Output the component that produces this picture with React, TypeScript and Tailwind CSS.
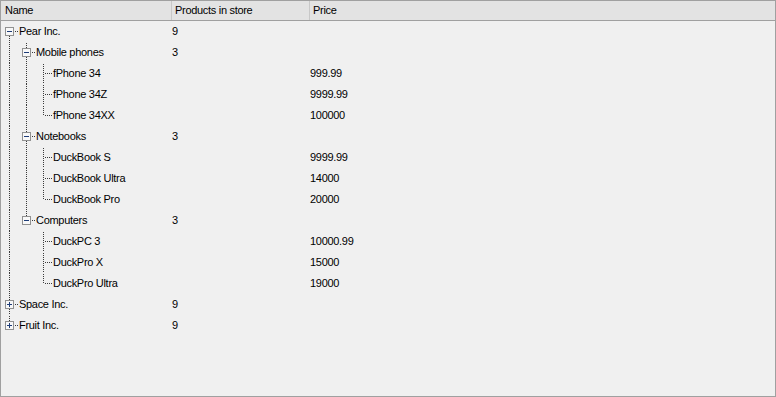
import React from "react";

// A node of the product tree
type Node = {
  name: string;
  count?: string;
  price?: string;
  expanded?: boolean;
  children?: Node[];
};

const data: Node[] = [
  {
    name: "Pear Inc.",
    count: "9",
    expanded: true,
    children: [
      {
        name: "Mobile phones",
        count: "3",
        expanded: true,
        children: [
          { name: "fPhone 34", price: "999.99" },
          { name: "fPhone 34Z", price: "9999.99" },
          { name: "fPhone 34XX", price: "100000" },
        ],
      },
      {
        name: "Notebooks",
        count: "3",
        expanded: true,
        children: [
          { name: "DuckBook S", price: "9999.99" },
          { name: "DuckBook Ultra", price: "14000" },
          { name: "DuckBook Pro", price: "20000" },
        ],
      },
      {
        name: "Computers",
        count: "3",
        expanded: true,
        children: [
          { name: "DuckPC 3", price: "10000.99" },
          { name: "DuckPro X", price: "15000" },
          { name: "DuckPro Ultra", price: "19000" },
        ],
      },
    ],
  },
  { name: "Space Inc.", count: "9", children: [{ name: "x" }] },
  { name: "Fruit Inc.", count: "9", children: [{ name: "x" }] },
];

type Row = {
  node: Node;
  guides: boolean[]; // ancestor has a following sibling
  first: boolean;
  last: boolean;
  root: boolean;
};

const flatten = (nodes: Node[], guides: boolean[], out: Row[]) => {
  nodes.forEach((node, i) => {
    const last = i === nodes.length - 1;
    out.push({ node, guides, first: i === 0, last, root: guides.length === 0 });
    if (node.expanded && node.children) {
      flatten(node.children, [...guides, !last], out);
    }
  });
  return out;
};

const rows = flatten(data, [], []);

const LINE = "#3a3a3a";

const Guide = ({ on }: { on: boolean }) => (
  <svg width="17" height="21" className="shrink-0 block">
    {on && (
      <line x1="8.5" y1="0" x2="8.5" y2="21" stroke={LINE} strokeDasharray="1 1" />
    )}
  </svg>
);

const Branch = ({ row }: { row: Row }) => {
  const hasKids = !!row.node.children;
  const top = !(row.root && row.first);
  return (
    <svg width="17" height="21" className="shrink-0 block">
      {top && (
        <line x1="8.5" y1="1" x2="8.5" y2="10" stroke={LINE} strokeDasharray="1 1" />
      )}
      {!row.last && (
        <line x1="8.5" y1="11" x2="8.5" y2="21" stroke={LINE} strokeDasharray="1 1" />
      )}
      <line x1={hasKids ? 14 : 10} y1="10.5" x2="17" y2="10.5" stroke={LINE} strokeDasharray="1 1" />
      {hasKids && (
        <g>
          <rect x="4.5" y="6.5" width="8" height="8" fill="#f8f8f8" stroke="#919191" />
          <line x1="6" y1="10.5" x2="11" y2="10.5" stroke="#1d3c78" />
          {!row.node.expanded && (
            <line x1="8.5" y1="8" x2="8.5" y2="13" stroke="#1d3c78" />
          )}
        </g>
      )}
    </svg>
  );
};

export default function App() {
  return (
    <div
      className="w-[776px] h-[397px] bg-[#f0f0f0] border border-[#a0a0a0] flex flex-col text-[11px] tracking-[-0.3px] text-black overflow-hidden"
      style={{ fontFamily: '"Liberation Sans", Arial, sans-serif' }}
    >
      <div className="flex h-[20px] shrink-0 bg-[#e3e3e3] border-b border-[#a0a0a0] leading-[19px]">
        <div className="w-[171px] pl-1 border-r border-[#c8c8c8]">Name</div>
        <div className="w-[138px] pl-[3px] border-r border-[#c8c8c8]">Products in store</div>
        <div className="flex-1 pl-[3px]">Price</div>
      </div>
      <div className="flex flex-col">
        {rows.map((row, i) => (
          <div key={i} className="flex h-[21px] items-center leading-[21px]">
            <div className="w-[170px] flex items-center">
              {row.guides.map((g, j) => (
                <Guide key={j} on={g} />
              ))}
              <Branch row={row} />
              <span className="pl-px whitespace-nowrap">{row.node.name}</span>
            </div>
            <div className="w-[138px] pl-px">{row.node.count}</div>
            <div className="flex-1 pl-px">{row.node.price}</div>
          </div>
        ))}
      </div>
    </div>
  );
}
